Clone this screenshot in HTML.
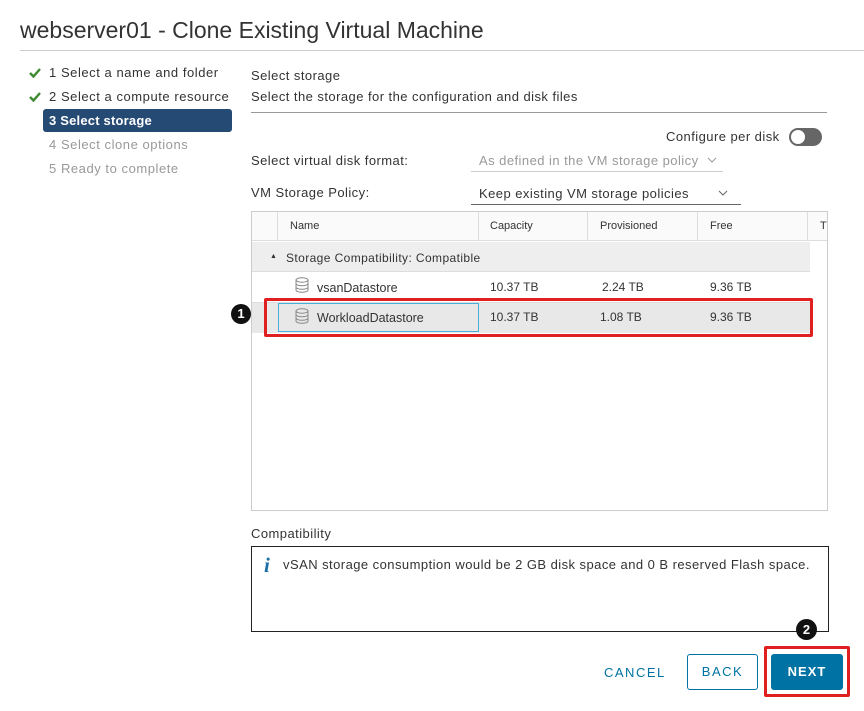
<!DOCTYPE html>
<html><head><style>
*{box-sizing:border-box;margin:0;padding:0}
body{width:864px;height:711px;background:#fff;font-family:"Liberation Sans",sans-serif;color:#333;position:relative;overflow:hidden;font-size:13px}
.a{position:absolute;white-space:nowrap}
.ls{letter-spacing:0.45px}
.nav{font-size:13px;letter-spacing:0.55px}
.cell{position:absolute;font-size:12px;color:#333;white-space:nowrap}
</style></head><body>
<div class="a" style="left:20px;top:17px;font-size:23px;color:#333">webserver01 - Clone Existing Virtual Machine</div>
<div class="a" style="left:20px;top:50px;width:844px;height:1px;background:#ccc"></div>

<svg class="a" style="left:28px;top:67px" width="14" height="12"><path d="M2 6 L5.5 9.5 L12 2" stroke="#3c8a2e" stroke-width="2.4" fill="none"/></svg>
<div class="a nav" style="left:49px;top:65px">1 Select a name and folder</div>
<svg class="a" style="left:28px;top:91px" width="14" height="12"><path d="M2 6 L5.5 9.5 L12 2" stroke="#3c8a2e" stroke-width="2.4" fill="none"/></svg>
<div class="a nav" style="left:49px;top:89px">2 Select a compute resource</div>
<div class="a" style="left:43px;top:109px;width:189px;height:23px;background:#254a73;border-radius:3px"></div>
<div class="a nav" style="left:49px;top:113px;color:#fff;font-weight:bold;letter-spacing:0.2px">3 Select storage</div>
<div class="a nav" style="left:49px;top:137px;color:#999">4 Select clone options</div>
<div class="a nav" style="left:49px;top:161px;color:#999">5 Ready to complete</div>

<div class="a ls" style="left:251px;top:68px">Select storage</div>
<div class="a ls" style="left:251px;top:89px">Select the storage for the configuration and disk files</div>
<div class="a" style="left:251px;top:112px;width:576px;height:1px;background:#999"></div>

<div class="a ls" style="left:666px;top:129px">Configure per disk</div>
<div class="a" style="left:789px;top:128px;width:33px;height:18px;border-radius:9px;background:#666"></div>
<div class="a" style="left:791px;top:130px;width:14px;height:14px;border-radius:7px;background:#fff"></div>

<div class="a ls" style="left:251px;top:153px">Select virtual disk format:</div>
<div class="a ls" style="left:479px;top:153px;color:#999">As defined in the VM storage policy</div>
<svg class="a" style="left:707px;top:157px" width="10" height="6"><path d="M1 1l4 4 4-4" stroke="#999" fill="none"/></svg>
<div class="a" style="left:471px;top:171px;width:252px;height:1px;background:#ccc"></div>
<div class="a ls" style="left:251px;top:185px">VM Storage Policy:</div>
<div class="a ls" style="left:479px;top:186px">Keep existing VM storage policies</div>
<svg class="a" style="left:718px;top:190px" width="10" height="6"><path d="M1 1l4 4 4-4" stroke="#666" fill="none"/></svg>
<div class="a" style="left:471px;top:204px;width:270px;height:1px;background:#666"></div>

<div class="a" style="left:251px;top:211px;width:577px;height:300px;border:1px solid #ccc"></div>
<div class="a" style="left:252px;top:212px;width:575px;height:29px;background:#fafafa;border-bottom:1px solid #ddd"></div>
<div class="a" style="left:277px;top:212px;width:1px;height:29px;background:#ddd"></div>
<div class="a" style="left:478px;top:212px;width:1px;height:29px;background:#ddd"></div>
<div class="a" style="left:587px;top:212px;width:1px;height:29px;background:#ddd"></div>
<div class="a" style="left:697px;top:212px;width:1px;height:29px;background:#ddd"></div>
<div class="a" style="left:807px;top:212px;width:1px;height:29px;background:#ddd"></div>
<div class="cell" style="left:290px;top:220px;font-size:11px">Name</div>
<div class="cell" style="left:490px;top:220px;font-size:11px">Capacity</div>
<div class="cell" style="left:600px;top:220px;font-size:11px">Provisioned</div>
<div class="cell" style="left:710px;top:220px;font-size:11px">Free</div>
<div class="cell" style="left:820px;top:220px;font-size:11px">T</div>
<div class="a" style="left:252px;top:242px;width:558px;height:30px;background:#eee;border-bottom:1px solid #ddd"></div>
<div class="cell" style="left:270px;top:253px;font-size:7px">▲</div>
<div class="cell" style="left:286px;top:251px;letter-spacing:0.4px">Storage Compatibility: Compatible</div>
<div class="a" style="left:252px;top:302px;width:558px;height:1px;background:#ddd"></div>
<svg class="a" style="left:295px;top:277px" width="14" height="16"><ellipse cx="7" cy="3" rx="6" ry="2.2" fill="none" stroke="#888"/><path d="M1 3v10c0 3 12 3 12 0V3M1 6.5c0 3 12 3 12 0M1 10c0 3 12 3 12 0" fill="none" stroke="#888"/></svg>
<div class="cell" style="left:317px;top:281px;font-size:12.5px">vsanDatastore</div>
<div class="cell" style="left:490px;top:280px">10.37 TB</div>
<div class="cell" style="left:602px;top:280px">2.24 TB</div>
<div class="cell" style="left:710px;top:280px">9.36 TB</div>
<div class="a" style="left:252px;top:303px;width:558px;height:30px;background:#e8e8e8"></div>
<div class="a" style="left:278px;top:303px;width:201px;height:29px;border:1px solid #49afd9"></div>
<svg class="a" style="left:295px;top:308px" width="14" height="16"><ellipse cx="7" cy="3" rx="6" ry="2.2" fill="none" stroke="#888"/><path d="M1 3v10c0 3 12 3 12 0V3M1 6.5c0 3 12 3 12 0M1 10c0 3 12 3 12 0" fill="none" stroke="#888"/></svg>
<div class="cell" style="left:317px;top:311px;font-size:12.5px">WorkloadDatastore</div>
<div class="cell" style="left:490px;top:310px">10.37 TB</div>
<div class="cell" style="left:600px;top:310px">1.08 TB</div>
<div class="cell" style="left:710px;top:310px">9.36 TB</div>
<div class="a" style="left:264px;top:298px;width:549px;height:39px;border:3px solid #e02020;border-radius:2px"></div>
<div class="a" style="left:231px;top:304px;width:20px;height:20px;border-radius:10px;background:#111;color:#fff;font-weight:bold;font-size:13px;text-align:center;line-height:20px">1</div>

<div class="a ls" style="left:251px;top:526px">Compatibility</div>
<div class="a" style="left:251px;top:546px;width:578px;height:86px;border:1px solid #222"></div>
<div class="a" style="left:264px;top:553px;font-family:'Liberation Serif',serif;font-style:italic;font-weight:bold;font-size:21px;color:#1d6fa8">i</div>
<div class="a ls" style="left:283px;top:557px">vSAN storage consumption would be 2 GB disk space and 0 B reserved Flash space.</div>

<div class="a" style="left:796px;top:619px;width:21px;height:21px;border-radius:11px;background:#111;color:#fff;font-weight:bold;font-size:13px;text-align:center;line-height:21px">2</div>
<div class="a" style="left:604px;top:665px;color:#0072a3;font-size:13px;letter-spacing:1.5px">CANCEL</div>
<div class="a" style="left:687px;top:654px;width:71px;height:36px;border:1px solid #0072a3;border-radius:3px;color:#0072a3;text-align:center;line-height:34px;letter-spacing:1.5px">BACK</div>
<div class="a" style="left:764px;top:646px;width:86px;height:51px;border:3px solid #e02020;border-radius:2px"></div>
<div class="a" style="left:771px;top:654px;width:72px;height:36px;background:#0072a3;border-radius:3px;color:#fff;font-weight:bold;text-align:center;line-height:36px;letter-spacing:1px">NEXT</div>
</body></html>
